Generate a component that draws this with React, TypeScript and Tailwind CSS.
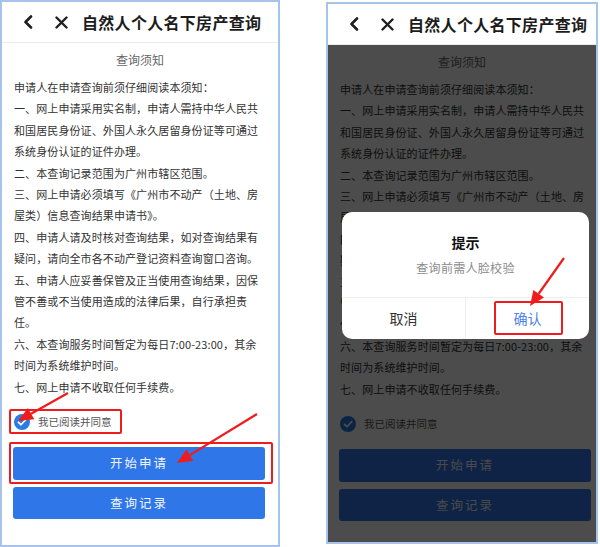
import React from "react";

const lines = [
  "申请人在申请查询前须仔细阅读本须知：",
  "一、网上申请采用实名制，申请人需持中华人民共",
  "和国居民身份证、外国人永久居留身份证等可通过",
  "系统身份认证的证件办理。",
  "二、本查询记录范围为广州市辖区范围。",
  "三、网上申请必须填写《广州市不动产（土地、房",
  "屋类）信息查询结果申请书》。",
  "四、申请人请及时核对查询结果，如对查询结果有",
  "疑问，请向全市各不动产登记资料查询窗口咨询。",
  "五、申请人应妥善保管及正当使用查询结果，因保",
  "管不善或不当使用造成的法律后果，自行承担责",
  "任。",
  "六、本查询服务时间暂定为每日7:00-23:00，其余",
  "时间为系统维护时间。",
  "七、网上申请不收取任何手续费。",
];

const Chevron = () => (
  <svg width="10" height="14" viewBox="0 0 10 14" fill="none" className="shrink-0">
    <path d="M8 1.5 L2.5 7 L8 12.5" stroke="#1f1f1f" strokeWidth="2.6" strokeLinecap="round" strokeLinejoin="round" />
  </svg>
);

const Close = () => (
  <svg width="13" height="13" viewBox="0 0 13 13" fill="none" className="shrink-0">
    <path d="M1.5 1.5 L11.5 11.5 M11.5 1.5 L1.5 11.5" stroke="#1f1f1f" strokeWidth="2.4" strokeLinecap="round" />
  </svg>
);

const Check = () => (
  <svg width="16" height="16" viewBox="0 0 16 16" className="shrink-0">
    <circle cx="8" cy="8" r="8" fill="#2a7be4" />
    <path d="M4.3 8.2 L7 10.8 L11.8 5.6" stroke="#fff" strokeWidth="1.6" fill="none" strokeLinecap="round" strokeLinejoin="round" />
  </svg>
);

function Arrow({ x1, y1, x2, y2 }: { x1: number; y1: number; x2: number; y2: number }) {
  const dx = x2 - x1;
  const dy = y2 - y1;
  const len = Math.hypot(dx, dy);
  const ux = dx / len;
  const uy = dy / len;
  const bx = x2 - ux * 15;
  const by = y2 - uy * 15;
  const px = -uy * 6.5;
  const py = ux * 6.5;
  return (
    <g>
      <line x1={x1} y1={y1} x2={bx} y2={by} stroke="#ee1c1c" strokeWidth="2.2" />
      <polygon points={`${x2},${y2} ${bx + px},${by + py} ${bx - px},${by - py}`} fill="#ee1c1c" />
    </g>
  );
}

function Phone({ className, dialog }: { className: string; dialog?: boolean }) {
  return (
    <div className={`relative flex flex-col overflow-hidden border-2 border-[#a6c3ea] bg-white ${className}`}>
      <div className="flex h-[41px] shrink-0 items-center border-b border-[#ececec] pl-[21px]">
        <Chevron />
        <div className="ml-[22px] flex shrink-0">
          <Close />
        </div>
        <div className="ml-[14px] shrink-0 whitespace-nowrap text-[16px] font-semibold leading-[24px] tracking-[0.3px] text-[#1c1c1c]">
          自然人个人名下房产查询
        </div>
      </div>
      <div className="mt-[7px] text-center text-[12px] leading-[20px] text-[#666]">查询须知</div>
      <div className="mt-[7px] pl-[12px] text-[11px] leading-[21.4px] tracking-[0.1px] text-[#333]">
        {lines.map((l) => (
          <div key={l} className="whitespace-nowrap">
            {l}
          </div>
        ))}
      </div>
      <div className="mt-[15px] flex h-[18px] items-center pl-[12px]">
        <Check />
        <span className="ml-[8px] text-[10.5px] text-[#555]">我已阅读并同意</span>
      </div>
      <button className="ml-[11px] mt-[16px] h-[33px] w-[252px] shrink-0 rounded-[3px] bg-[#2f76e9] text-[12.5px] tracking-[2px] text-[#eef3fd]">
        开始申请
      </button>
      <button className="ml-[11px] mt-[7px] h-[32px] w-[252px] shrink-0 rounded-[3px] bg-[#2f76e9] text-[12.5px] tracking-[2px] text-[#eef3fd]">
        查询记录
      </button>
      {dialog && (
        <>
          <div className="absolute bottom-0 left-0 right-0 top-[41px] bg-black/70" />
          <div className="absolute left-[14px] top-[208px] flex h-[127px] w-[247px] flex-col overflow-hidden rounded-[10px] bg-white">
            <div className="flex h-[85px] flex-col items-center pt-[20px]">
              <div className="text-[14px] font-bold leading-[20px] text-[#111]">提示</div>
              <div className="mt-[7px] text-[12px] leading-[18px] tracking-[0.3px] text-[#8a8a8a]">查询前需人脸校验</div>
            </div>
            <div className="flex h-[42px] border-t border-[#eeeeee]">
              <div className="flex flex-1 items-center justify-center border-r border-[#eeeeee] text-[14px] text-[#333]">取消</div>
              <div className="flex flex-1 items-center justify-center text-[14px] text-[#4c82e8]">确认</div>
            </div>
          </div>
        </>
      )}
    </div>
  );
}

export default function App() {
  return (
    <div className="relative flex h-[547px] w-[600px] items-start overflow-hidden bg-white font-['Noto_Sans_CJK_SC','Liberation_Sans',sans-serif]">
      <Phone className="h-[547px] w-[280px]" />
      <Phone className="ml-[46px] mt-[2px] h-[542px] w-[272px]" dialog />
      <div className="pointer-events-none absolute left-[9px] top-[409px] h-[25px] w-[113px] rounded-[2px] border-2 border-[#ee1c1c]" />
      <div className="pointer-events-none absolute left-[9px] top-[442px] h-[42px] w-[264px] rounded-[2px] border-2 border-[#ee1c1c]" />
      <div className="pointer-events-none absolute left-[494px] top-[301px] h-[34px] w-[69px] rounded-[2px] border-2 border-[#ee1c1c]" />
      <svg className="pointer-events-none absolute left-0 top-0" width="600" height="547">
        <Arrow x1={68} y1={393} x2={18} y2={421} />
        <Arrow x1={257} y1={414} x2={177} y2={463} />
        <Arrow x1={564} y1={258} x2={530} y2={306} />
      </svg>
    </div>
  );
}
